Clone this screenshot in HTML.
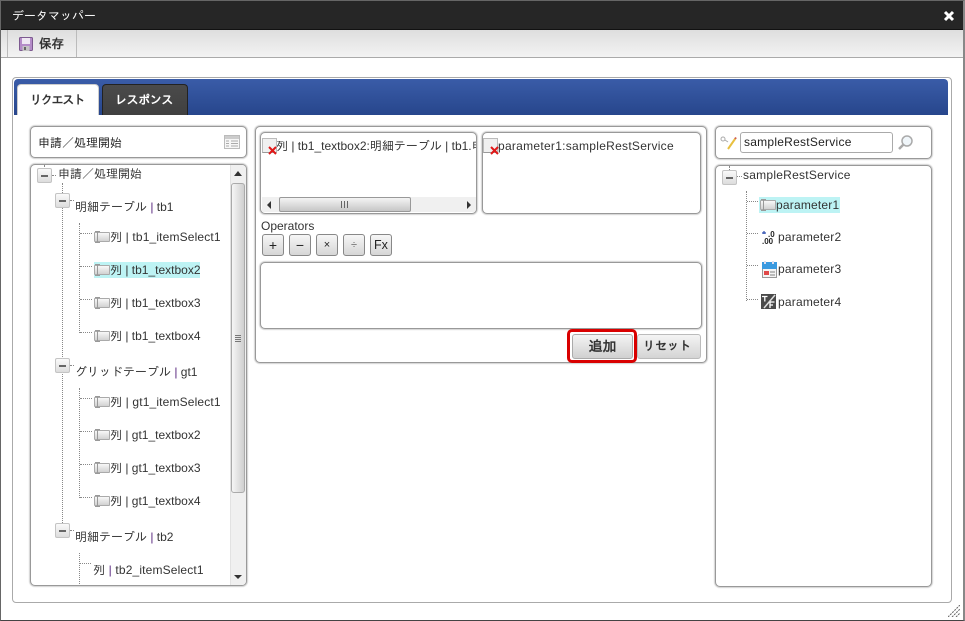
<!DOCTYPE html>
<html lang="ja"><head><meta charset="utf-8"><title>データマッパー</title>
<style>
html,body{margin:0;padding:0;background:#fff}
body{width:965px;height:621px;overflow:hidden;position:relative;font:12px "Liberation Sans","IPAGothic","Noto Sans CJK JP",sans-serif;color:#333}
div,svg.a{position:absolute;box-sizing:border-box}
.t{white-space:nowrap;line-height:14px;height:14px}
.box{background:#fff;border:1px solid #999;border-radius:5px;box-shadow:0 0 1px 1px rgba(0,0,0,.18)}
.v{width:1px;border-left:1px dotted #888}
.h{height:1px;border-top:1px dotted #888}
.min{width:15px;height:15px;border:1px solid #c4c4c4;border-radius:2px;background:linear-gradient(#fafafa,#dcdcdc)}
.min:after{content:"";position:absolute;left:3px;top:6px;width:7px;height:2px;background:#666}
.ic{width:16px;height:10px;border:1px solid #aaa;border-radius:1px;background:linear-gradient(#f8f8f8,#d2d2d2)}
.ic:before{content:"";position:absolute;left:0;top:-2px;width:5px;height:12px;background:linear-gradient(#999,#999) 2px 0/1px 12px no-repeat,linear-gradient(#999,#999) 0 0/5px 1px no-repeat,linear-gradient(#999,#999) 0 11px/5px 1px no-repeat}
.ic2{width:15px;height:15px;border:1px solid #bbb;border-bottom-color:#999;background:#f0f0f0}
.op{top:234px;height:22px;border:1px solid #888;border-radius:3px;background:linear-gradient(#f6f6f6,#d6d6d6);text-align:center;line-height:20px;color:#222}
.hl{background:#bdf3f4;height:16px}
.s{letter-spacing:.15px}
i{font-style:normal;color:#5a2a80}
</style></head><body>
<div style="left:0;top:0;width:965px;height:621px;border:1px solid #666;border-width:1px 2px 1px 1px;border-right-color:#888;border-bottom-color:#444"></div>
<div style="left:1px;top:1px;width:962px;height:29px;background:#262626;border-bottom:1px solid #111"></div>
<div class="t" style="left:12px;top:9px;color:#fff;font-size:12px">データマッパー</div>
<svg class="a" style="left:943px;top:10px" width="12" height="12" viewBox="0 0 12 12"><path d="M2 2 L10 10 M10 2 L2 10" stroke="#fff" stroke-width="3"/></svg>

<div style="left:1px;top:30px;width:962px;height:28px;background:linear-gradient(#dedede,#f3f3f3);border-bottom:1px solid #aaa"></div>
<div style="left:7px;top:30px;width:70px;height:27px;border-left:1px solid #bbb;border-right:1px solid #bbb"></div>
<svg class="a" style="left:19px;top:37px" width="14" height="14" viewBox="0 0 14 14"><rect x=".5" y=".5" width="13" height="13" rx="1" fill="#b48cc8" stroke="#7d5a90"/><rect x="3" y="1" width="8" height="6" fill="#efe8f3"/><rect x="3.500" y="9" width="7" height="5" fill="#c4c4c4"/><rect x="5" y="10" width="2" height="3" fill="#666"/></svg>
<div class="t" style="left:39px;top:37px;font-weight:bold;font-size:12.5px;color:#333">保存</div>

<div style="left:12px;top:77px;width:940px;height:526px;border:1px solid #aaa;border-radius:4px;background:#fff"></div>
<div style="left:14px;top:79px;width:934px;height:36px;background:linear-gradient(#3a5ca8,#27468c);border-radius:4px 4px 0 0"></div>
<div style="left:17px;top:84px;width:82px;height:31px;background:#fff;border:1px solid #ccc;border-bottom:0;border-radius:4px 4px 0 0"></div>
<div class="t" style="left:30px;top:93px;font-weight:bold;color:#333;letter-spacing:-1.200px">リクエスト</div>
<div style="left:102px;top:84px;width:86px;height:31px;background:linear-gradient(#4a4a4a,#404040);border:1px solid #222;border-bottom:0;border-radius:4px 4px 0 0"></div>
<div class="t" style="left:115px;top:93px;font-weight:bold;color:#fff;letter-spacing:-.4px">レスポンス</div>

<!-- Left -->
<div class="box" style="left:30px;top:126px;width:217px;height:32px"></div>
<div class="t" style="left:38px;top:136px;color:#222">申請／処理開始</div>
<svg class="a" style="left:224px;top:135px" width="16" height="14" viewBox="0 0 16 14"><rect x=".5" y=".5" width="15" height="13" fill="#f6f6f6" stroke="#bbb"/><rect x="1" y="1" width="14" height="3" fill="#ccc"/><path d="M2 6h3M7 6h7M2 8.500h3M7 8.500h7M2 11h3M7 11h7" stroke="#aaa"/></svg>

<div class="box" style="left:30px;top:164px;width:217px;height:422px;overflow:hidden"></div>
<div style="left:230px;top:165px;width:16px;height:420px;background:#f0f0f0;border-left:1px solid #e2e2e2;border-radius:0 4px 4px 0"></div>
<div style="left:231px;top:183px;width:14px;height:310px;background:linear-gradient(90deg,#f6f6f6,#cfcfcf);border:1px solid #aaa;border-radius:3px"></div>
<div style="left:235px;top:335px;width:6px;height:7px;background:repeating-linear-gradient(#777 0 1px,transparent 1px 2px)"></div>
<svg class="a" style="left:234px;top:171px" width="8" height="5"><path d="M0 5L4 0L8 5Z" fill="#333"/></svg>
<svg class="a" style="left:234px;top:575px" width="8" height="4"><path d="M0 0L8 0L4 4Z" fill="#333"/></svg>

<div class="v" style="left:62px;top:183px;height:340px"></div>
<div class="v" style="left:44px;top:165px;height:4px"></div>
<div class="h" style="left:52px;top:175px;width:4px"></div>
<div class="min" style="left:37px;top:168px"></div>
<div class="t" style="left:58px;top:167px">申請／処理開始</div>

<div class="min" style="left:55px;top:193px"></div><div class="h" style="left:70px;top:200px;width:4px"></div>
<div class="t" style="left:75px;top:200px">明細テーブル <i>|</i> tb1</div>
<div class="v" style="left:79px;top:223px;height:110px"></div>
<div class="h" style="left:80px;top:233px;width:12px"></div>
<div class="h" style="left:80px;top:266px;width:12px"></div>
<div class="h" style="left:80px;top:299px;width:12px"></div>
<div class="h" style="left:80px;top:332px;width:12px"></div>
<div class="hl" style="left:94px;top:262px;width:106px"></div>
<div class="ic" style="left:94px;top:232px"></div><div class="t s" style="left:110px;top:230px">列 | tb1_itemSelect1</div>
<div class="ic" style="left:94px;top:265px"></div><div class="t" style="left:110px;top:263px">列 | tb1_textbox2</div>
<div class="ic" style="left:94px;top:298px"></div><div class="t" style="left:110px;top:296px">列 | tb1_textbox3</div>
<div class="ic" style="left:94px;top:331px"></div><div class="t" style="left:110px;top:329px">列 | tb1_textbox4</div>

<div class="min" style="left:55px;top:358px"></div><div class="h" style="left:70px;top:365px;width:4px"></div>
<div class="t" style="left:75px;top:365px">グリッドテーブル <i>|</i> gt1</div>
<div class="v" style="left:79px;top:388px;height:110px"></div>
<div class="h" style="left:80px;top:398px;width:12px"></div>
<div class="h" style="left:80px;top:431px;width:12px"></div>
<div class="h" style="left:80px;top:464px;width:12px"></div>
<div class="h" style="left:80px;top:497px;width:12px"></div>
<div class="ic" style="left:94px;top:397px"></div><div class="t s" style="left:110px;top:395px">列 | gt1_itemSelect1</div>
<div class="ic" style="left:94px;top:430px"></div><div class="t" style="left:110px;top:428px">列 | gt1_textbox2</div>
<div class="ic" style="left:94px;top:463px"></div><div class="t" style="left:110px;top:461px">列 | gt1_textbox3</div>
<div class="ic" style="left:94px;top:496px"></div><div class="t" style="left:110px;top:494px">列 | gt1_textbox4</div>

<div class="min" style="left:55px;top:523px"></div><div class="h" style="left:70px;top:530px;width:4px"></div>
<div class="t" style="left:75px;top:530px">明細テーブル <i>|</i> tb2</div>
<div class="v" style="left:79px;top:553px;height:31px"></div>
<div class="h" style="left:80px;top:563px;width:11px"></div>
<div class="t s" style="left:93px;top:563px">列 <i>|</i> tb2_itemSelect1</div>

<!-- Middle -->
<div class="box" style="left:255px;top:126px;width:452px;height:237px"></div>
<div class="box" style="left:260px;top:132px;width:217px;height:82px;overflow:hidden">
  <div class="t" style="left:15px;top:6px;width:200px;overflow:hidden">列 | tb1_textbox2:明細テーブル | tb1.申請</div>
  <div class="ic2" style="left:1px;top:5px"></div>
  <div style="left:1px;top:64px;width:214px;height:15px;background:#f0f0f0"></div>
  <div style="left:18px;top:64px;width:132px;height:15px;background:linear-gradient(#f4f4f4,#c6c6c6);border:1px solid #999;border-radius:2px"></div>
  <div style="left:80px;top:68px;width:8px;height:7px;background:repeating-linear-gradient(90deg,#666 0 1px,transparent 1px 3px)"></div>
  <svg class="a" style="left:6px;top:68px" width="4" height="8"><path d="M4 0V8L0 4Z" fill="#333"/></svg>
  <svg class="a" style="left:206px;top:68px" width="4" height="8"><path d="M0 0V8L4 4Z" fill="#333"/></svg>
</div>
<svg class="a" style="left:268px;top:146px" width="9" height="9"><path d="M1 1L8 8M8 1L1 8" stroke="#e01818" stroke-width="2"/></svg>
<div class="box" style="left:482px;top:132px;width:219px;height:82px"></div>
<div class="ic2" style="left:483px;top:138px"></div>
<svg class="a" style="left:490px;top:146px" width="9" height="9"><path d="M1 1L8 8M8 1L1 8" stroke="#e01818" stroke-width="2"/></svg>
<div class="t" style="left:498px;top:139px;letter-spacing:.28px">parameter1:sampleRestService</div>
<div class="t" style="left:261px;top:219px">Operators</div>
<div class="op" style="left:262px;width:22px;font-size:14px">+</div>
<div class="op" style="left:289px;width:22px;font-size:14px">−</div>
<div class="op" style="left:316px;width:22px;font-size:11px">×</div>
<div class="op" style="left:343px;width:22px;font-size:11px;color:#666">÷</div>
<div class="op" style="left:370px;width:22px;font-size:12.500px">Fx</div>
<div class="box" style="left:260px;top:262px;width:442px;height:67px"></div>
<div style="left:637px;top:334px;width:64px;height:25px;background:linear-gradient(#f4f4f4,#d4d4d4);border:1px solid #bbb;border-radius:3px;text-align:center;line-height:23px;font-weight:bold;padding-right:4px">リセット</div>
<div style="left:572px;top:334px;width:61px;height:25px;background:linear-gradient(#f4f4f4,#d0d0d0);border:1px solid #aaa;border-radius:3px;text-align:center;line-height:23px;font-weight:bold;font-size:14px">追加</div>
<div style="left:567px;top:329px;width:70px;height:34px;border:3px solid #d90000;border-radius:5px"></div>

<!-- Right -->
<div class="box" style="left:715px;top:126px;width:217px;height:33px"></div>
<svg class="a" style="left:720px;top:136px" width="18" height="15" viewBox="0 0 18 15"><circle cx="3" cy="3" r="2" fill="none" stroke="#aaa"/><path d="M5 4L8 6" stroke="#aaa"/><path d="M8 13L15 3" stroke="#e8c040" stroke-width="2"/><path d="M15 3L16 1.500" stroke="#d06050" stroke-width="2"/></svg>
<div style="left:740px;top:132px;width:153px;height:21px;border:1px solid #aaa;border-radius:3px;background:#fff;padding-left:3px;line-height:19px;color:#222;letter-spacing:.25px">sampleRestService</div>
<svg class="a" style="left:897px;top:134px" width="17" height="17" viewBox="0 0 17 17"><circle cx="10" cy="7" r="5" fill="#f0f6fa" stroke="#aaa" stroke-width="1.500"/><path d="M6.500 10.500L2 15" stroke="#aaa" stroke-width="2.500"/></svg>

<div class="box" style="left:715px;top:165px;width:217px;height:422px"></div>
<div class="min" style="left:722px;top:170px"></div>
<div class="v" style="left:729px;top:166px;height:4px"></div>
<div class="h" style="left:737px;top:176px;width:5px"></div>
<div class="t" style="left:743px;top:168px;letter-spacing:.25px">sampleRestService</div>
<div class="v" style="left:746px;top:191px;height:110px"></div>
<div class="h" style="left:747px;top:201px;width:11px"></div>
<div class="h" style="left:747px;top:233px;width:11px"></div>
<div class="h" style="left:747px;top:265px;width:11px"></div>
<div class="h" style="left:747px;top:299px;width:11px"></div>
<div class="hl" style="left:759px;top:197px;width:81px"></div>
<div class="ic" style="left:760px;top:200px"></div>
<div class="t" style="left:776px;top:198px;letter-spacing:.2px">parameter1</div>
<svg class="a" style="left:761px;top:229px" width="16" height="16" viewBox="0 0 16 16"><path d="M1 4H5M3 2V5" stroke="#3050b0" stroke-width="1.200"/><text x="7" y="8" font-size="8" font-weight="bold" fill="#222" font-family="Liberation Sans">.0</text><text x="1" y="15" font-size="8" font-weight="bold" fill="#222" font-family="Liberation Sans">.00</text></svg>
<div class="t" style="left:778px;top:230px;letter-spacing:.2px">parameter2</div>
<svg class="a" style="left:761px;top:261px" width="16" height="17" viewBox="0 0 16 17"><rect x="1.500" y="1.500" width="14" height="15" fill="#f4f4f4" stroke="#999"/><rect x="1" y="1" width="15" height="7" fill="#3a9ae0"/><rect x="3" y="0" width="2" height="3" fill="#dde"/><rect x="11" y="0" width="2" height="3" fill="#dde"/><rect x="3" y="10" width="5" height="4" fill="#e04848"/><rect x="9" y="10" width="5" height="2" fill="#bbb"/><rect x="9" y="13" width="5" height="2" fill="#bbb"/></svg>
<div class="t" style="left:778px;top:262px;letter-spacing:.2px">parameter3</div>
<svg class="a" style="left:761px;top:294px" width="15" height="15" viewBox="0 0 15 15"><rect width="15" height="15" fill="#4a4a4a"/><path d="M3 14L14 1" stroke="#ddd" stroke-width="1.500"/><path d="M1 2.500H6.500M3.800 2.500V7.500M9 8H13.500M9 8V14M9 11H12" stroke="#fff" stroke-width="1.300" fill="none"/></svg>
<div class="t" style="left:778px;top:295px;letter-spacing:.2px">parameter4</div>

<svg class="a" style="left:948px;top:605px" width="12" height="12"><path d="M0 12L12 0M4 12L12 4M8 12L12 8" stroke="#666" stroke-dasharray="2 1"/></svg>
</body></html>
